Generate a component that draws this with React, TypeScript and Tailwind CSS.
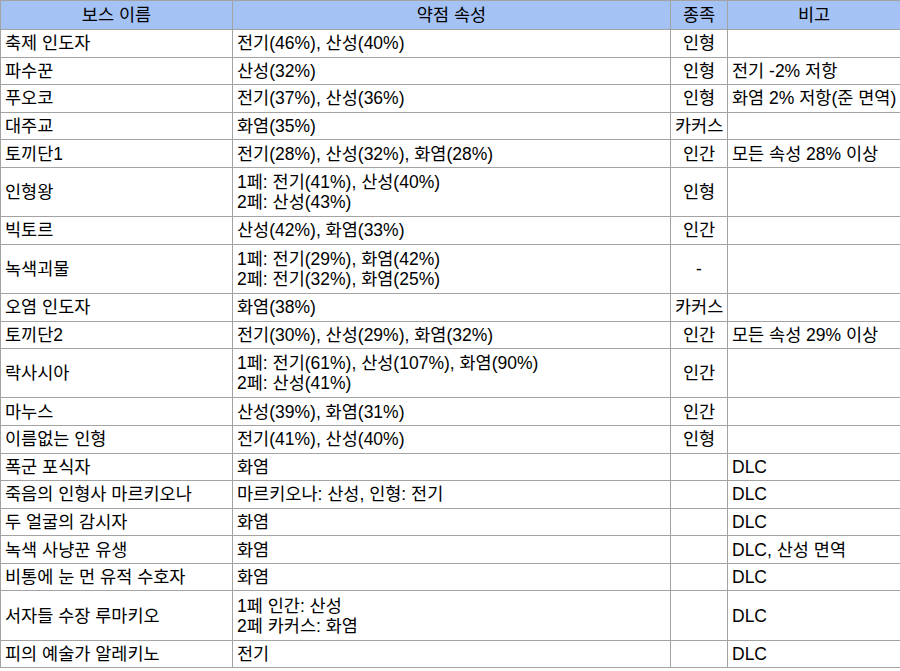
type Row = {
  name: string;
  weak: string[];
  race: string;
  note: string;
};

const rows: Row[] = [
  { name: "축제 인도자", weak: ["전기(46%), 산성(40%)"], race: "인형", note: "" },
  { name: "파수꾼", weak: ["산성(32%)"], race: "인형", note: "전기 -2% 저항" },
  { name: "푸오코", weak: ["전기(37%), 산성(36%)"], race: "인형", note: "화염 2% 저항(준 면역)" },
  { name: "대주교", weak: ["화염(35%)"], race: "카커스", note: "" },
  { name: "토끼단1", weak: ["전기(28%), 산성(32%), 화염(28%)"], race: "인간", note: "모든 속성 28% 이상" },
  { name: "인형왕", weak: ["1페: 전기(41%), 산성(40%)", "2페: 산성(43%)"], race: "인형", note: "" },
  { name: "빅토르", weak: ["산성(42%), 화염(33%)"], race: "인간", note: "" },
  { name: "녹색괴물", weak: ["1페: 전기(29%), 화염(42%)", "2페: 전기(32%), 화염(25%)"], race: "-", note: "" },
  { name: "오염 인도자", weak: ["화염(38%)"], race: "카커스", note: "" },
  { name: "토끼단2", weak: ["전기(30%), 산성(29%), 화염(32%)"], race: "인간", note: "모든 속성 29% 이상" },
  { name: "락사시아", weak: ["1페: 전기(61%), 산성(107%), 화염(90%)", "2페: 산성(41%)"], race: "인간", note: "" },
  { name: "마누스", weak: ["산성(39%), 화염(31%)"], race: "인간", note: "" },
  { name: "이름없는 인형", weak: ["전기(41%), 산성(40%)"], race: "인형", note: "" },
  { name: "폭군 포식자", weak: ["화염"], race: "", note: "DLC" },
  { name: "죽음의 인형사 마르키오나", weak: ["마르키오나: 산성, 인형: 전기"], race: "", note: "DLC" },
  { name: "두 얼굴의 감시자", weak: ["화염"], race: "", note: "DLC" },
  { name: "녹색 사냥꾼 유생", weak: ["화염"], race: "", note: "DLC, 산성 면역" },
  { name: "비통에 눈 먼 유적 수호자", weak: ["화염"], race: "", note: "DLC" },
  { name: "서자들 수장 루마키오", weak: ["1페 인간: 산성", "2페 카커스: 화염"], race: "", note: "DLC" },
  { name: "피의 예술가 알레키노", weak: ["전기"], race: "", note: "DLC" },
];

const cell = "border border-[#a3a3a3] px-[4px] align-middle";

export default function App() {
  return (
    <div
      className="w-[900px] h-[671px] overflow-hidden bg-white text-black text-[17.5px] leading-[20px]"
      style={{ fontFamily: '"Liberation Sans", Arial, "Noto Sans CJK KR", sans-serif' }}
    >
      <table className="w-[901px] border-collapse table-fixed">
        <colgroup>
          <col className="w-[232px]" />
          <col className="w-[438px]" />
          <col className="w-[57px]" />
          <col />
        </colgroup>
        <thead>
          <tr className="h-[29px] bg-[#a4c2f4]">
            <th className={`${cell} font-normal text-center`}>보스 이름</th>
            <th className={`${cell} font-normal text-center`}>약점 속성</th>
            <th className={`${cell} font-normal text-center`}>종족</th>
            <th className={`${cell} font-normal text-center`}>비고</th>
          </tr>
        </thead>
        <tbody>
          {rows.map((r) => (
            <tr key={r.name} className={r.weak.length > 1 ? "h-[49.2px]" : "h-[27.6px]"}>
              <td className={`${cell} whitespace-nowrap`}>{r.name}</td>
              <td className={`${cell} whitespace-nowrap`}>
                {r.weak.map((w) => (
                  <div key={w}>{w}</div>
                ))}
              </td>
              <td className={`${cell} text-center whitespace-nowrap px-0`}>{r.race}</td>
              <td className={`${cell} whitespace-nowrap`}>{r.note}</td>
            </tr>
          ))}
        </tbody>
      </table>
    </div>
  );
}
